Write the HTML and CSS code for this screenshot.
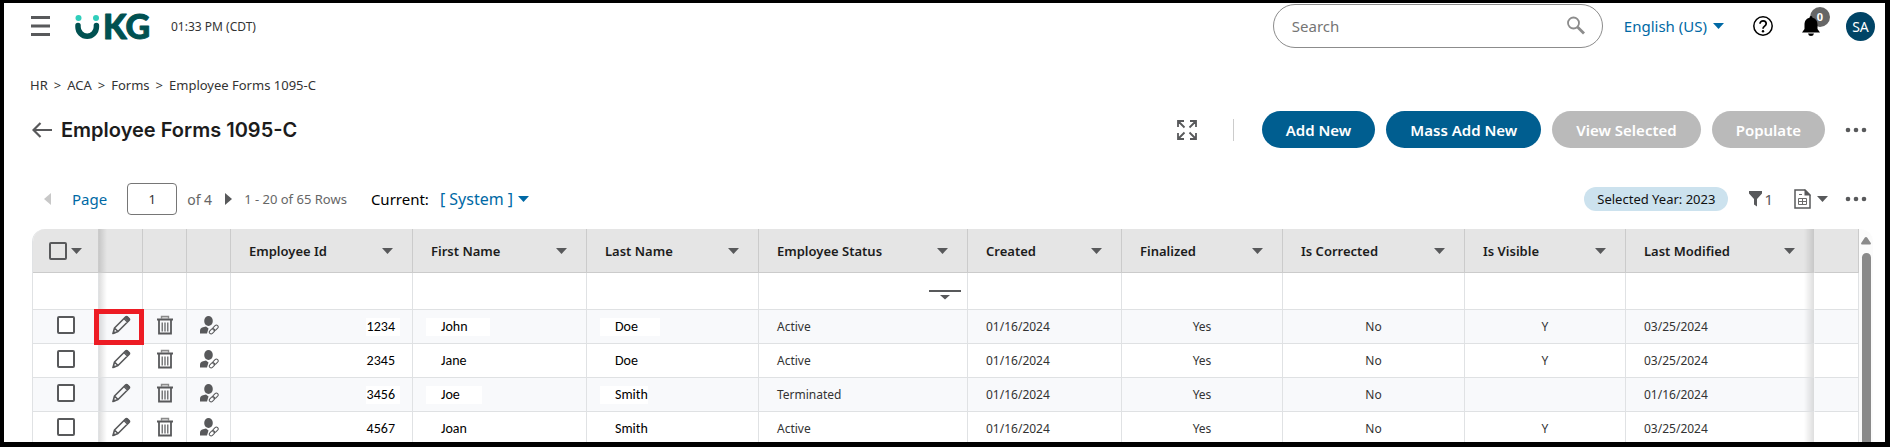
FILE: index.html
```html
<!DOCTYPE html>
<html lang="en">
<head>
<meta charset="utf-8">
<title>Employee Forms 1095-C</title>
<link rel="stylesheet" href="styles.css">
</head>
<body>
<svg class="sprite" aria-hidden="true">
  <symbol id="caret" viewBox="0 0 11 6"><path d="M0 0h11L5.500 6z" fill="currentColor"/></symbol>
  <symbol id="dots" viewBox="0 0 22 6"><circle cx="3" cy="3" r="2.300"/><circle cx="11" cy="3" r="2.300"/><circle cx="19" cy="3" r="2.300"/></symbol>
  <symbol id="pencil" viewBox="0 0 20 20"><path d="M2 18.500l1.500-5.500L14.500 2q1-1 2 0l1.500 1.500q1 1 0 2L7 16.500zM3.500 13L7 16.500M13 3.500L16.500 7" fill="none" stroke="currentColor" stroke-width="1.600" stroke-linejoin="round"/><path d="M13.500 3l1.500-1.500h1.500l2 2V5L17 6.500zM1.500 19l1-3.500L4.800 18z" fill="currentColor"/></symbol>
  <symbol id="trash" viewBox="0 0 18 20"><path d="M5.500 3.500V1.500h7v2" fill="#ddd" stroke="#8a8a8a" stroke-width="1.400"/><path d="M1 4.500h16M3 5v13.500h12V5" fill="none" stroke="currentColor" stroke-width="1.800"/><path d="M6.200 7.500v9M9 7.500v9M11.800 7.500v9" stroke="currentColor" stroke-width="1.200"/></symbol>
  <symbol id="userlink" viewBox="0 0 20 20"><ellipse cx="9.500" cy="6" rx="4.300" ry="5" fill="currentColor"/><path d="M1 18.500v-3Q1 13 4 12.200L7 11.500l2.500 2-1.500 5z" fill="currentColor"/><g fill="none" stroke="currentColor"><rect x="10" y="14.500" width="6" height="3.600" rx="1.800" transform="rotate(-45 13 16.300)"/><rect x="13.500" y="11" width="6" height="3.600" rx="1.800" transform="rotate(-45 16.500 12.800)"/></g></symbol>
</svg>
<div class="app">
  <header class="topbar">
    <button class="icon-btn menu" aria-label="Menu"><svg width="19" height="20" viewBox="0 0 19 20"><path d="M0 1.500h19M0 10h19M0 18.500h19" stroke="#58595b" stroke-width="3"/></svg></button>
    <a class="logo" href="#" aria-label="UKG"><svg class="logo-art" width="80" height="30" viewBox="0 0 80 30">
      <circle cx="3.500" cy="7" r="3" fill="#30cebb"/><circle cx="21" cy="7" r="3" fill="#30cebb"/>
      <path d="M3 14.500v1.500a9.200 9.200 0 0 0 18.400 0v-1.500" fill="none" stroke="#005151" stroke-width="5.500" stroke-linecap="round"/>
      <text class="logo-text" x="28" y="28">KG</text>
    </svg></a>
    <span class="clock">01:33 PM (CDT)</span>
    <label class="search">
      <input type="text" placeholder="Search" aria-label="Search">
      <svg width="20" height="20" viewBox="0 0 20 20"><circle cx="7.500" cy="7" r="5.500" fill="none" stroke="#8c8c8c" stroke-width="1.800"/><path d="M11.500 11l6.500 6.500" stroke="#8c8c8c" stroke-width="2.800"/></svg>
    </label>
    <button class="language link">English (US)<svg class="caret"><use href="#caret"/></svg></button>
    <button class="icon-btn help" aria-label="Help"><svg width="20" height="20" viewBox="0 0 20 20"><circle cx="10" cy="10" r="9.200" fill="none" stroke="#000" stroke-width="1.500"/><path d="M7 7.800c0-4 6.200-3.900 6.200 0 0 2.300-3.200 2.500-3.200 5" fill="none" stroke="#000" stroke-width="1.700"/><circle cx="10" cy="15.200" r="1.200"/></svg></button>
    <button class="icon-btn bell" aria-label="Notifications"><svg width="18" height="20" viewBox="0 0 18 20"><path d="M9 0q1.500 0 1.500 1.800C14.500 2.700 15.500 6 15.500 9v4l2.500 3.500H0L2.500 13V9c0-3 1-6.300 5-7.200Q7.500 0 9 0zM6 17.500h6q-.5 2.500-3 2.500t-3-2.500z"/></svg><span class="badge">0</span></button>
    <button class="avatar">SA</button>
  </header>

  <nav class="crumbs" aria-label="Breadcrumb">
    <a href="#">HR</a><span>&gt;</span><a href="#">ACA</a><span>&gt;</span><a href="#">Forms</a><span>&gt;</span><a href="#">Employee Forms 1095-C</a>
  </nav>

  <div class="titlebar">
    <button class="icon-btn back" aria-label="Back"><svg width="20" height="16" viewBox="0 0 20 16"><path d="M20 8H2M8.500 1L1.500 8l7 7" fill="none" stroke="#58595b" stroke-width="2.200"/></svg></button>
    <h1>Employee Forms 1095-C</h1>
    <button class="icon-btn expand" aria-label="Full screen"><svg width="20" height="20" viewBox="0 0 20 20"><path d="M1 7V1h6M1 1l6.500 6.500M13 1h6v6M19 1l-6.500 6.500M1 13v6h6M1 19l6.500-6.500M13 19h6v-6M19 19l-6.500-6.500" fill="none" stroke="#58595b" stroke-width="1.800"/></svg></button>
    <span class="divider"></span>
    <div class="actions">
      <button class="pill">Add New</button>
      <button class="pill">Mass Add New</button>
      <button class="pill" disabled>View Selected</button>
      <button class="pill" disabled>Populate</button>
    </div>
    <button class="icon-btn" aria-label="More actions"><svg class="dots"><use href="#dots"/></svg></button>
  </div>

  <div class="toolbar">
    <button class="icon-btn prev" aria-label="Previous page" disabled><svg width="7" height="12" viewBox="0 0 7 12"><path d="M7 0v12L0 6z" fill="#c8c8c8"/></svg></button>
    <label class="page-label" for="page">Page</label>
    <input class="page" id="page" type="text" value="1">
    <span class="total">of 4</span>
    <button class="icon-btn next" aria-label="Next page"><svg width="7" height="12" viewBox="0 0 7 12"><path d="M0 0v12l7-6z" fill="#58595b"/></svg></button>
    <span class="range">1 - 20 of 65 Rows</span>
    <span class="current">Current:</span>
    <button class="view link">[ System ]<svg class="caret"><use href="#caret"/></svg></button>
    <span class="tag">Selected Year: 2023</span>
    <button class="icon-btn filter" aria-label="Filters"><svg width="13" height="16" viewBox="0 0 13 16"><path d="M0 0h13v2.500L8 8v7.500L5 13.500V8L0 2.500z" fill="#58595b"/></svg>1</button>
    <button class="icon-btn export" aria-label="Export"><svg width="17" height="20" viewBox="0 0 17 20"><path d="M1 1h10l5 5v13H1z" fill="#fff" stroke="#58595b" stroke-width="1.500"/><path d="M10.500 0L17 6.500h-6.500z" fill="#58595b"/><path d="M4.500 9.500h8v6h-8zM8.500 9.500v6M4.500 12.500h8M5 5.500h3" fill="none" stroke="#6b6b6b"/></svg><svg class="caret"><use href="#caret"/></svg></button>
    <button class="icon-btn" aria-label="More options"><svg class="dots"><use href="#dots"/></svg></button>
  </div>

  <div class="grid-wrap">
    <table class="grid">
      <colgroup><col class="c-check"><col class="c-icon"><col class="c-icon"><col class="c-icon"><col class="c-id"><col class="c-first"><col class="c-last"><col class="c-status"><col class="c-created"><col class="c-visible"><col class="c-id"><col class="c-visible"><col class="c-modified"><col class="c-icon"></colgroup>
      <thead>
        <tr>
          <th class="center"><div class="all"><input type="checkbox" aria-label="Select all"><svg class="caret"><use href="#caret"/></svg></div></th>
          <th class="shade-l"></th><th></th><th></th>
          <th><div class="head">Employee Id<svg class="caret"><use href="#caret"/></svg></div></th>
          <th><div class="head">First Name<svg class="caret"><use href="#caret"/></svg></div></th>
          <th><div class="head">Last Name<svg class="caret"><use href="#caret"/></svg></div></th>
          <th><div class="head">Employee Status<svg class="caret"><use href="#caret"/></svg></div></th>
          <th><div class="head">Created<svg class="caret"><use href="#caret"/></svg></div></th>
          <th><div class="head">Finalized<svg class="caret"><use href="#caret"/></svg></div></th>
          <th><div class="head">Is Corrected<svg class="caret"><use href="#caret"/></svg></div></th>
          <th><div class="head">Is Visible<svg class="caret"><use href="#caret"/></svg></div></th>
          <th class="shade-r"><div class="head">Last Modified<svg class="caret"><use href="#caret"/></svg></div></th>
          <th></th>
        </tr>
      </thead>
      <tbody>
        <tr class="filters"><td></td><td class="shade-l"></td><td></td><td></td><td></td><td></td><td></td><td><button class="icon-btn filter-status" aria-label="Filter employee status"><svg width="32" height="10" viewBox="0 0 32 10"><path d="M0 0h32v2H0zM11 5h10l-5 4.500z" fill="#58595b"/></svg></button></td><td></td><td></td><td></td><td></td><td class="shade-r"></td><td></td></tr>
        <tr>
          <td class="center control"><input type="checkbox" aria-label="Select John Doe"></td>
          <td class="center control shade-l marked"><button class="icon-btn" aria-label="Edit"><svg class="ico"><use href="#pencil"/></svg></button></td>
          <td class="center control"><button class="icon-btn" aria-label="Delete"><svg class="ico"><use href="#trash"/></svg></button></td>
          <td class="center control"><button class="icon-btn" aria-label="Employee link"><svg class="ico"><use href="#userlink"/></svg></button></td>
          <td class="num"><span class="patch">1234</span></td><td class="name"><span class="patch">John</span></td><td class="name"><span class="patch">Doe</span></td>
          <td>Active</td><td>01/16/2024</td><td class="center">Yes</td><td class="center">No</td><td class="center">Y</td><td class="shade-r">03/25/2024</td><td></td>
        </tr>
        <tr>
          <td class="center control"><input type="checkbox" aria-label="Select Jane Doe"></td>
          <td class="center control shade-l"><button class="icon-btn" aria-label="Edit"><svg class="ico"><use href="#pencil"/></svg></button></td>
          <td class="center control"><button class="icon-btn" aria-label="Delete"><svg class="ico"><use href="#trash"/></svg></button></td>
          <td class="center control"><button class="icon-btn" aria-label="Employee link"><svg class="ico"><use href="#userlink"/></svg></button></td>
          <td class="num"><span class="patch">2345</span></td><td class="name"><span class="patch">Jane</span></td><td class="name"><span class="patch">Doe</span></td>
          <td>Active</td><td>01/16/2024</td><td class="center">Yes</td><td class="center">No</td><td class="center">Y</td><td class="shade-r">03/25/2024</td><td></td>
        </tr>
        <tr>
          <td class="center control"><input type="checkbox" aria-label="Select Joe Smith"></td>
          <td class="center control shade-l"><button class="icon-btn" aria-label="Edit"><svg class="ico"><use href="#pencil"/></svg></button></td>
          <td class="center control"><button class="icon-btn" aria-label="Delete"><svg class="ico"><use href="#trash"/></svg></button></td>
          <td class="center control"><button class="icon-btn" aria-label="Employee link"><svg class="ico"><use href="#userlink"/></svg></button></td>
          <td class="num"><span class="patch">3456</span></td><td class="name"><span class="patch">Joe</span></td><td class="name"><span class="patch tight">Smith</span></td>
          <td>Terminated</td><td>01/16/2024</td><td class="center">Yes</td><td class="center">No</td><td></td><td class="shade-r">01/16/2024</td><td></td>
        </tr>
        <tr>
          <td class="center control"><input type="checkbox" aria-label="Select Joan Smith"></td>
          <td class="center control shade-l"><button class="icon-btn" aria-label="Edit"><svg class="ico"><use href="#pencil"/></svg></button></td>
          <td class="center control"><button class="icon-btn" aria-label="Delete"><svg class="ico"><use href="#trash"/></svg></button></td>
          <td class="center control"><button class="icon-btn" aria-label="Employee link"><svg class="ico"><use href="#userlink"/></svg></button></td>
          <td class="num"><span class="patch">4567</span></td><td class="name"><span class="patch">Joan</span></td><td class="name"><span class="patch">Smith</span></td>
          <td>Active</td><td>01/16/2024</td><td class="center">Yes</td><td class="center">No</td><td class="center">Y</td><td class="shade-r">03/25/2024</td><td></td>
        </tr>
      </tbody>
    </table>
    <div class="scrollbar"><svg width="10" height="8" viewBox="0 0 10 8"><path d="M5 0q.8 0 1.300.8L9.800 6q.5 1.500-.8 1.500H1Q-.3 7.500.2 6L3.700.8Q4.200 0 5 0z" fill="#8a8a8a"/></svg><div class="thumb"></div></div>
  </div>
</div>
</body>
</html>
```
FILE: styles.css
```css
* { box-sizing: border-box; }
body { margin: 0; font-family: "Noto Sans", "Open Sans", sans-serif; font-size: 13px; color: #333; background: #fff; }
button, input { font: inherit; color: inherit; }
button { background: none; border: 0; padding: 0; margin: 0; white-space: nowrap; }
svg { display: block; flex: none; }
a { color: inherit; text-decoration: none; }
.sprite { position: absolute; width: 0; height: 0; }
.app { height: 100vh; overflow: hidden; display: flex; flex-direction: column; border: solid #000; border-width: 3px 5px 5px 4px; }
.icon-btn { display: inline-flex; align-items: center; color: #58595b; }
.caret { width: 11px; height: 6px; }
.dots { width: 22px; height: 6px; fill: #58595b; }
.link { display: flex; align-items: center; gap: 6px; color: #0069a5; font-size: 15px; }

.topbar { display: flex; align-items: center; height: 46px; padding: 0 10px 0 27px; flex: none; }
.logo { margin-left: 25px; }
.logo-art { overflow: visible; }
.logo-text { font-family: Lato, sans-serif; font-weight: 900; font-size: 34px; line-height: 30px; fill: #005151; stroke: #005151; stroke-width: 1px; stroke-linejoin: round; }
.clock { margin-left: 16px; font-size: 12px; }
.search { display: flex; align-items: center; width: 330px; height: 44px; margin-left: auto; padding: 0 16px 0 18px; border: 1px solid #8c8c8c; border-radius: 22px; }
.search input { flex: 1; min-width: 0; border: 0; padding: 0; outline: 0; background: none; font-size: 15px; }
.search input::placeholder { color: #757575; opacity: 1; }
.language { margin-left: 21px; }
.help { margin-left: 29px; }
.bell { position: relative; margin-left: 29px; }
.badge { position: absolute; left: 8px; top: -9px; z-index: -1; width: 20px; height: 20px; border-radius: 50%; background: #666; color: #fff; font-size: 11px; font-weight: 700; line-height: 20px; text-align: center; }
.avatar { width: 29px; height: 29px; margin-left: 26px; border-radius: 50%; background: #004466; color: #fff; font-size: 14px; }

.crumbs { display: flex; gap: 6px; margin-top: 24px; padding-left: 26px; line-height: 24px; font-size: 13px; flex: none; }
.titlebar { display: flex; align-items: center; height: 37px; margin-top: 14px; padding: 0 18px 0 28px; flex: none; }
h1 { margin: 0 auto 0 9px; font-family: Inter, sans-serif; font-size: 20px; font-weight: 600; line-height: 28px; color: #1c1c1c; }
.divider { width: 1px; height: 22px; margin: 0 28px 0 36px; background: #ccc; }
.actions { display: flex; gap: 11px; margin-right: 20px; }
.pill { height: 37px; padding: 0 24px; border-radius: 19px; background: #005e90; color: #fff; font-size: 15px; font-weight: 600; }
.pill:disabled { background: #bababa; }

.toolbar { display: flex; align-items: center; height: 32px; margin-top: 35px; padding: 0 18px 0 40px; flex: none; }
.page-label { margin-left: 21px; color: #0069a5; font-size: 15px; }
.page { width: 50px; height: 32px; margin-left: 20px; padding: 0; border: 1px solid #767676; border-radius: 4px; text-align: center; font-size: 13px; }
.total { margin-left: 10px; font-size: 14px; color: #666; }
.next { margin-left: 13px; }
.range { margin-left: 12px; color: #666; }
.current { margin-left: 24px; font-size: 15px; color: #000; }
.view { margin-left: 11px; font-size: 16px; gap: 5px; }
.tag { margin-left: auto; padding: 0 13px; border-radius: 12px; background: #cce2ee; color: #111; line-height: 24px; }
.filter { margin-left: 21px; gap: 2px; font-size: 15px; }
.export { margin: 0 17px 0 21px; gap: 6px; }

.grid-wrap { display: flex; align-items: stretch; flex: 1 0 0; min-height: 0; margin-top: 14px; padding: 0 12px 0 28px; }
.grid { flex: 1; width: 0; height: max-content; table-layout: fixed; border-collapse: separate; border-spacing: 0; border-left: 1px solid #e0e2e4; border-top-left-radius: 13px; overflow: hidden; }
.c-check { width: 66px; }
.c-icon { width: 44px; }
.c-id { width: 182px; }
.c-first { width: 174px; }
.c-last { width: 172px; }
.c-status { width: 209px; }
.c-created { width: 154px; }
.c-visible { width: 161px; }
.c-modified { width: 189px; }
th, td { padding: 0 0 0 18px; border-right: 1px solid #e0e2e4; border-bottom: 1px solid #dfe1e3; text-align: left; white-space: nowrap; }
th { height: 44px; background-color: #e5e5e5; border-color: #cbcbcb; font-weight: 600; font-size: 13px; color: #1c1c1c; }
td { height: 34px; font-size: 12px; }
.filters td { height: 37px; }
tbody tr:nth-child(even) { background: #f8f9fb; }
.head { display: flex; align-items: center; justify-content: space-between; padding-right: 19px; }
.head .caret, .all .caret { color: #58595b; }
.center { padding: 0; text-align: center; }
.control { padding-bottom: 3px; }
.all { display: flex; align-items: center; justify-content: center; gap: 4px; }
.center .icon-btn, .center input { vertical-align: middle; }
input[type="checkbox"] { appearance: none; width: 18px; height: 18px; margin: 0; border: 2px solid #58595b; border-radius: 2px; background: #fff; }
th input[type="checkbox"] { background: none; }
.ico { width: 20px; height: 20px; }
.shade-l { background-image: linear-gradient(to right, rgba(0,0,0,.13), rgba(0,0,0,0) 8px); }
.shade-r { border-right-color: transparent; background-image: linear-gradient(to left, rgba(0,0,0,.13), rgba(0,0,0,0) 10px); }
.marked { position: relative; }
.marked::after { content: ""; position: absolute; inset: -1px -2px -2px -5px; border: 5px solid #ed1c24; }
.num { padding: 0 12px 0 0; text-align: right; }
.name { padding-left: 13px; }
.patch { display: inline-block; padding: 0 22px 0 15px; background: #fff; color: #000; font-family: Carlito, Lato, sans-serif; font-size: 14px; line-height: 18px; vertical-align: middle; }
.num .patch { padding: 0 5px 0 1px; }
.tight { padding-right: 0; }
.filter-status { display: flex; margin: 8px 6px 0 auto; }
.scrollbar { display: flex; flex-direction: column; align-items: center; gap: 8px; width: 14px; padding-top: 8px; background: #fbfbfb; border-top-right-radius: 13px; }
.thumb { flex: 1; width: 9px; border-radius: 5px 5px 0 0; background: #8a8a8a; }
```
